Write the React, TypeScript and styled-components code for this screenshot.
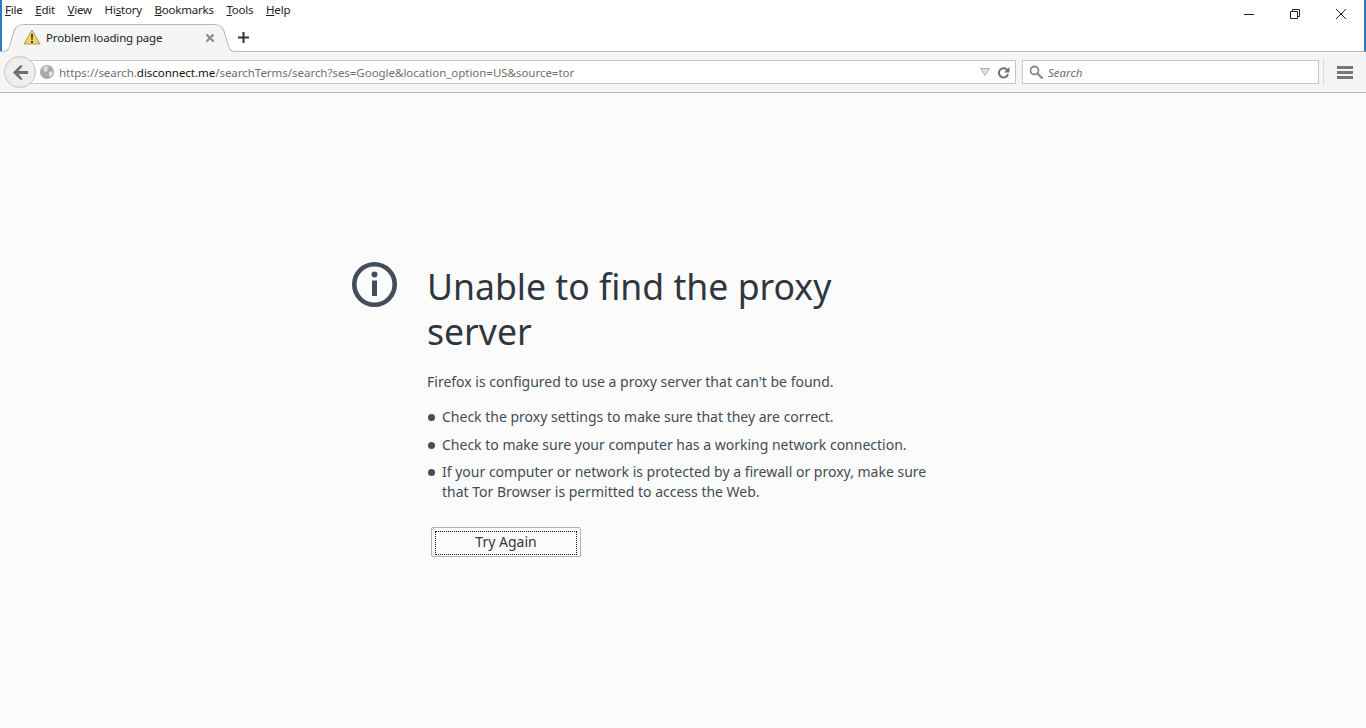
import styled, { createGlobalStyle } from 'styled-components';

const GlobalStyle = createGlobalStyle`
    html, body {
        margin: 0;
        padding: 0;
        height: 100%;
        background: #fbfbfb;
        overflow: hidden;
    }
    #root {
        height: 100%;
    }
`;

const uiFont = `'Noto Sans', 'Open Sans', sans-serif`;

type MenuEntry = { key: string; rest: string; lead?: string };

const menus: MenuEntry[] = [
    { key: 'F', rest: 'ile' },
    { key: 'E', rest: 'dit' },
    { key: 'V', rest: 'iew' },
    { lead: 'Hi', key: 's', rest: 'tory' },
    { key: 'B', rest: 'ookmarks' },
    { key: 'T', rest: 'ools' },
    { key: 'H', rest: 'elp' },
];

function App() {
    return (
        <Page>
            <GlobalStyle />
            <Chrome>
                <TitleBar>
                    <MenuBar>
                        {menus.map((m) => (
                            <MenuItem key={m.key + m.rest}>
                                {m.lead}
                                <u>{m.key}</u>
                                {m.rest}
                            </MenuItem>
                        ))}
                    </MenuBar>
                    <WindowControls>
                        <WindowButton>
                            <svg width="12" height="12" viewBox="0 0 12 12">
                                <path d="M1 6.500h10" stroke="#222" fill="none" />
                            </svg>
                        </WindowButton>
                        <WindowButton>
                            <svg width="12" height="12" viewBox="0 0 12 12">
                                <path d="M1.500 3.500h7v7h-7zM3.500 3.500v-2h7v7h-2" stroke="#222" fill="none" />
                            </svg>
                        </WindowButton>
                        <WindowButton>
                            <svg width="12" height="12" viewBox="0 0 12 12">
                                <path d="M1 1l10 10M11 1L1 11" stroke="#222" fill="none" />
                            </svg>
                        </WindowButton>
                    </WindowControls>
                </TitleBar>
                <TabStrip>
                    <Tab>
                        <TabShape viewBox="0 0 232 30" preserveAspectRatio="none">
                            <path
                                d="M0 28.500h3c5 0 6-3 8-11l3-10c2-5 5-6 10-6h186c5 0 8 1 10 6l3 10c2 8 3 11 8 11h3V30H0z"
                                fill="#f5f5f5"
                            />
                            <path
                                d="M0 28.500h3c5 0 6-3 8-11l3-10c2-5 5-6 10-6h186c5 0 8 1 10 6l3 10c2 8 3 11 8 11h3"
                                fill="none"
                                stroke="#b9b9b9"
                            />
                        </TabShape>
                        <WarningIcon width="18" height="16" viewBox="0 0 18 16">
                            <path d="M9 1l8 14H1z" fill="#f2d35c" stroke="#a89a6a" strokeLinejoin="round" />
                            <path d="M8 5h2l-.4 6h-1.200zM8 12h2v2H8z" fill="#3a3a2a" />
                        </WarningIcon>
                        <TabTitle>Problem loading page</TabTitle>
                        <TabClose width="10" height="10" viewBox="0 0 10 10">
                            <path d="M1.500 1.500l7 7M8.500 1.500l-7 7" stroke="#8c8c8c" strokeWidth="2.200" fill="none" />
                        </TabClose>
                    </Tab>
                    <NewTab width="11" height="11" viewBox="0 0 11 11">
                        <path d="M5.500 0v11M0 5.500h11" stroke="#333" strokeWidth="2" fill="none" />
                    </NewTab>
                </TabStrip>
            </Chrome>
            <NavBar>
                <BackButton>
                    <svg width="17" height="15" viewBox="0 0 17 15">
                        <path d="M8 .5L1 7.500l7 7h3L6.500 9H16V6H6.500L11 .5z" fill="#6e6e6e" />
                    </svg>
                </BackButton>
                <UrlBar>
                    <Globe width="14" height="14" viewBox="0 0 14 14">
                        <circle cx="7" cy="7" r="7" fill="#a8a8a8" />
                        <path d="M4 2l3-1 2 1-2 2 1 2-3 1-2-2zM9 7l3-1 1 2-2 4-2-1z" fill="#e0e0e0" />
                    </Globe>
                    <UrlText>
                        https://search.<strong>disconnect.me</strong>
                        /searchTerms/search?ses=Google&amp;location_option=US&amp;source=tor
                    </UrlText>
                    <svg width="10" height="8" viewBox="0 0 10 8">
                        <path d="M.5.500h9L5 7.500z" fill="#dcdcdc" stroke="#b0b0b0" />
                    </svg>
                    <Reload width="13" height="13" viewBox="0 0 13 13">
                        <path d="M10.500 4.500A4.600 4.600 0 1 0 11 8" fill="none" stroke="#6f6f6f" strokeWidth="2" />
                        <path d="M12.500 1v5.500H7z" fill="#6f6f6f" />
                    </Reload>
                </UrlBar>
                <SearchBar>
                    <svg width="15" height="15" viewBox="0 0 15 15">
                        <circle cx="5.500" cy="5.500" r="4" fill="none" stroke="#8a8a8a" strokeWidth="1.800" />
                        <path d="M8.500 8.500l5 5" stroke="#8a8a8a" strokeWidth="2.400" />
                    </svg>
                    <SearchHint>Search</SearchHint>
                </SearchBar>
                <NavDivider />
                <Hamburger>
                    <span />
                    <span />
                    <span />
                </Hamburger>
            </NavBar>
            <Content>
                <ErrorBox>
                    <InfoIcon width="45" height="45" viewBox="0 0 45 45">
                        <circle cx="22.500" cy="22.500" r="20.200" fill="none" stroke="#434e5a" strokeWidth="4.600" />
                        <circle cx="22.500" cy="12.500" r="3" fill="#434e5a" />
                        <path d="M20 18.500h5V34h-5z" fill="#434e5a" />
                    </InfoIcon>
                    <ErrorBody>
                        <Title>Unable to find the proxy server</Title>
                        <Lead>Firefox is configured to use a proxy server that can't be found.</Lead>
                        <Tips>
                            <Tip>Check the proxy settings to make sure that they are correct.</Tip>
                            <Tip>Check to make sure your computer has a working network connection.</Tip>
                            <Tip>
                                If your computer or network is protected by a firewall or proxy, make sure
                                that Tor Browser is permitted to access the Web.
                            </Tip>
                        </Tips>
                        <TryAgain>
                            <span>Try Again</span>
                        </TryAgain>
                    </ErrorBody>
                </ErrorBox>
            </Content>
        </Page>
    );
}

export default App;

const Page = styled.div`
    height: 100%;
    display: flex;
    flex-direction: column;
    font-family: ${uiFont};
    background: #fbfbfb;
`;

const Chrome = styled.div`
    height: 52px;
    box-sizing: border-box;
    background: #fff;
    border-left: 2px solid #2b7cc2;
    border-right: 2px solid #2b7cc2;
    border-bottom: 1px solid #b9b9b9;
    display: flex;
    flex-direction: column;
`;

const TitleBar = styled.div`
    height: 22px;
    display: flex;
    justify-content: space-between;
`;

const MenuBar = styled.div`
    display: flex;
    gap: 12.600px;
    padding: 1px 0 0 3px;
`;

const MenuItem = styled.span`
    font-size: 11.500px;
    line-height: 18px;
    color: #222;
    letter-spacing: -0.2px;
`;

const WindowControls = styled.div`
    display: flex;
`;

const WindowButton = styled.div`
    width: 46px;
    height: 28px;
    display: flex;
    align-items: center;
    justify-content: center;
`;

const TabStrip = styled.div`
    flex: 1;
    display: flex;
    align-items: center;
`;

const Tab = styled.div`
    position: relative;
    width: 229px;
    height: 29px;
    margin-top: 1px;
    display: flex;
    align-items: center;
    padding: 0 0 0 21px;
    box-sizing: border-box;
`;

const TabShape = styled.svg`
    position: absolute;
    left: -2px;
    top: 0;
    width: 236px;
    height: 30px;
`;

const WarningIcon = styled.svg`
    position: relative;
    flex: none;
    margin-bottom: 2px;
`;

const TabTitle = styled.span`
    position: relative;
    margin-left: 5px;
    font-size: 11.500px;
    letter-spacing: -0.15px;
    color: #222;
    flex: 1;
`;

const TabClose = styled.svg`
    position: relative;
    margin-right: 16px;
`;

const NewTab = styled.svg`
    margin-left: 7px;
`;

const NavBar = styled.div`
    height: 41px;
    box-sizing: border-box;
    background: #f5f5f5;
    border-bottom: 1px solid #b9b9b9;
    display: flex;
    align-items: center;
    padding-left: 4px;
`;

const BackButton = styled.div`
    width: 32px;
    height: 32px;
    box-sizing: border-box;
    border-radius: 50%;
    border: 1px solid #c4c4c4;
    background: #eeeeee;
    display: flex;
    align-items: center;
    justify-content: center;
    position: relative;
    z-index: 1;
`;

const UrlBar = styled.div`
    width: 988px;
    height: 24px;
    margin-left: -8px;
    box-sizing: border-box;
    background: #fff;
    border: 1px solid #c6c6c6;
    display: flex;
    align-items: center;
    padding: 0 5px 0 11px;
`;

const Globe = styled.svg`
    flex: none;
`;

const UrlText = styled.div`
    flex: 1;
    margin-left: 5px;
    font-size: 11.500px;
    letter-spacing: -0.03px;
    color: #6f6f6f;
    white-space: nowrap;
    strong {
        font-weight: 400;
        color: #111;
    }
`;

const Reload = styled.svg`
    margin-left: 7px;
`;

const SearchBar = styled.div`
    width: 297px;
    height: 24px;
    margin-left: 6px;
    box-sizing: border-box;
    background: #fff;
    border: 1px solid #c6c6c6;
    display: flex;
    align-items: center;
    padding: 0 6px;
`;

const SearchHint = styled.span`
    margin-left: 4px;
    font-size: 11.500px;
    font-style: italic;
    color: #6f6f6f;
`;

const NavDivider = styled.div`
    width: 1px;
    height: 28px;
    margin-left: 4px;
    background: #dcdcdc;
`;

const Hamburger = styled.div`
    width: 16px;
    margin-left: 13px;
    display: flex;
    flex-direction: column;
    gap: 2px;
    span {
        height: 3px;
        background: #777;
    }
`;

const Content = styled.div`
    flex: 1;
    padding: 169px 0 0 352px;
    background: #fbfbfb;
`;

const ErrorBox = styled.div`
    display: flex;
    width: 580px;
`;

const InfoIcon = styled.svg`
    flex: none;
`;

const ErrorBody = styled.div`
    margin-left: 30px;
    color: #434c55;
`;

const Title = styled.h1`
    margin: 0;
    padding-top: 2px;
    width: 480px;
    font-size: 35.600px;
    line-height: 45px;
    font-weight: 400;
    color: #2f3640;
`;

const Lead = styled.p`
    margin: 18px 0 0;
    font-size: 14px;
    line-height: 20px;
`;

const Tips = styled.ul`
    margin: 15px 0 0;
    padding: 0 0 0 15px;
    list-style: none;
`;

const Tip = styled.li`
    position: relative;
    margin-bottom: 7.700px;
    font-size: 14px;
    line-height: 20px;
    &::before {
        content: '';
        position: absolute;
        left: -14px;
        top: 7px;
        width: 7px;
        height: 7px;
        border-radius: 50%;
        background: #434e5a;
    }
`;

const TryAgain = styled.button`
    display: block;
    margin: 24.600px 0 0 4px;
    width: 150px;
    height: 30px;
    padding: 3px;
    box-sizing: border-box;
    background: #fbfbfb;
    border: 1px solid #b3b3b3;
    border-radius: 2px;
    font-family: ${uiFont};
    span {
        display: block;
        height: 100%;
        border: 1px dotted #111;
        font-size: 14px;
        line-height: 20px;
        color: #2f3640;
    }
`;
